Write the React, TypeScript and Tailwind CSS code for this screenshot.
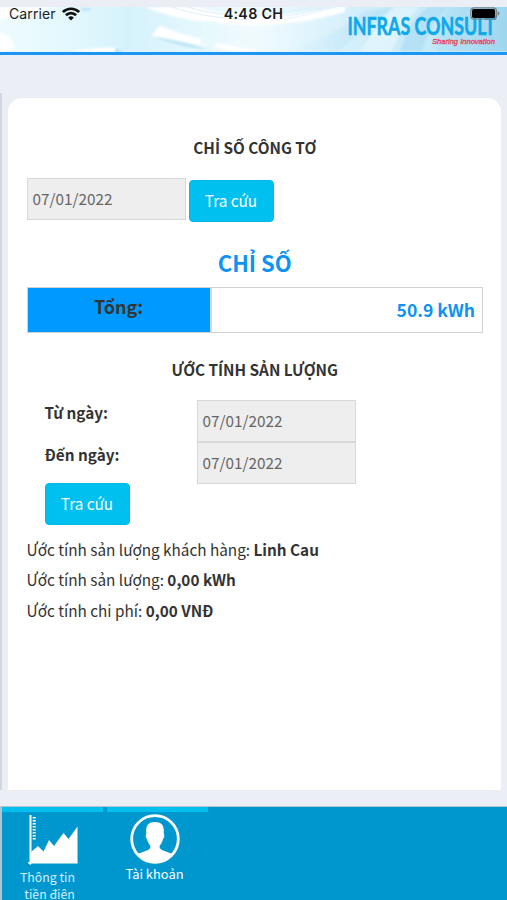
type SummaryRow = { label: string; value: string };

const SUMMARY: SummaryRow[] = [
  { label: 'Ước tính sản lượng khách hàng:', value: 'Linh Cau' },
  { label: 'Ước tính sản lượng:', value: '0,00 kWh' },
  { label: 'Ước tính chi phí:', value: '0,00 VNĐ' },
];

const HeaderBackground = () => (
  <svg className="absolute inset-0 h-full w-full" viewBox="0 0 507 45" preserveAspectRatio="none">
    <defs>
      <linearGradient id="sky" x1="0" x2="1" y1="0" y2="0">
        <stop offset="0" stopColor="#effbfe" />
        <stop offset="0.14" stopColor="#e3f8fd" />
        <stop offset="0.25" stopColor="#d5f2fc" />
        <stop offset="0.5" stopColor="#f1fbfe" />
        <stop offset="0.7" stopColor="#d3effb" />
        <stop offset="0.86" stopColor="#c3e9f9" />
        <stop offset="1" stopColor="#9bd5ef" />
      </linearGradient>
      <linearGradient id="shade" x1="0" x2="1" y1="0" y2="0">
        <stop offset="0" stopColor="#bfe6f8" stopOpacity="0" />
        <stop offset="1" stopColor="#a9dcf4" />
      </linearGradient>
      <filter id="soft">
        <feGaussianBlur stdDeviation="1.2" />
      </filter>
    </defs>
    <rect width="507" height="45" fill="url(#sky)" />
    <g filter="url(#soft)">
      <path d="M0 0h58l-20 4L0 12z" fill="#fff" />
      <path d="M82 1h10l-2 3h-9z" fill="#bde5fa" />
      <path d="M0 26q12 3 15 15l-15 6z" fill="#fff" />
      <path d="M70 45q28-5 45-4l5 5z" fill="#fff" />
      <path d="M115 42l8 4h-8z" fill="#a9ddf3" />
      <path d="M145 0h52q55 17 130 2l18-3v6q-60 18-125 12-48-5-75-17z" fill="#fff" />
      <path d="M160 19q25 10 60 18l40 8h-25l-84-16z" fill="#fff" />
      <path d="M154 30q30 4 56 14l-20-3q-22-5-36-11z" fill="#bde6f6" />
      <path d="M205 14l15 2-5 27-15-6z" fill="#e6fafb" />
      <path d="M275 45q50-8 88-40l30-5-55 45z" fill="url(#shade)" opacity="0.55" />
      <path d="M360 45q18-28 35-45h24q-18 20-27 45z" fill="#eaf8fe" opacity="0.65" />
      <path d="M400 45q8-28 28-45h20q-20 18-26 45z" fill="#a8dbf3" opacity="0.6" />
      <path d="M437 45q-1-18 12-45h58v45z" fill="#a5daf0" opacity="0.35" />
    </g>
    <g fill="none" stroke="#cce6ee" strokeWidth="0.6">
      <path d="M172 0q30 11 78 13M188 0q20 7 56 9" />
      <path d="M270 14q32-3 60-13M275 10q30-2 50-10M270 6q24-1 42-6" strokeDasharray="2 1" />
    </g>
  </svg>
);

const Logo = () => (
  <svg className="absolute top-0 right-0" width="167" height="45" viewBox="340 7 167 45">
    <text
      x="347.5"
      y="34.5"
      textLength="148"
      lengthAdjust="spacingAndGlyphs"
      className="fill-[#0fa9ea] stroke-[#0fa9ea] stroke-[0.6] font-['Lato',sans-serif] text-[25.500px] font-bold"
    >
      INFRAS CONSULT
    </text>
    <text
      x="432"
      y="44"
      textLength="63"
      lengthAdjust="spacingAndGlyphs"
      className="fill-[#e6455a] stroke-[#e6455a] stroke-[0.35] font-['Liberation_Sans',sans-serif] text-[8px] italic"
    >
      Sharing Innovation
    </text>
  </svg>
);

const WifiIcon = () => (
  <svg width="18" height="14" viewBox="0 0 18 14" fill="none" stroke="#111" strokeWidth="2.7">
    <path d="M0.9 5.1a11.5 11.5 0 0 1 16.2 0" />
    <path d="M3.9 8.3a7.2 7.2 0 0 1 10.2 0" />
    <path d="M9 13.6l-2.8-2.9a4 4 0 0 1 5.6 0z" fill="#111" stroke="none" />
  </svg>
);

const BatteryIcon = () => (
  <svg width="30" height="13" viewBox="0 0 30 13">
    <rect x="0.8" y="0.8" width="25.8" height="11.4" rx="3.4" fill="none" stroke="#75858d" strokeWidth="1.2" />
    <rect x="2" y="2" width="23.2" height="9" rx="1.8" fill="#000" />
    <path d="M27.8 4.3q1.8 0.8 1.8 2.2t-1.8 2.2z" fill="#75858d" />
  </svg>
);

const StatusBar = () => (
  <div className="absolute inset-x-0 top-0 flex h-[27px] items-center justify-between pr-[7px] pl-[9px] font-['Inter',sans-serif] text-[#1c1c1e]">
    <div className="flex w-[200px] items-center gap-1.5 text-[14px] tracking-[0.1px]">
      Carrier
      <WifiIcon />
    </div>
    <div className="-ml-0.5 text-[14.300px] font-semibold tracking-[0.3px]">4:48 CH</div>
    <div className="flex w-[200px] justify-end">
      <BatteryIcon />
    </div>
  </div>
);

const DateField = ({ value }: { value: string }) => (
  <div className="flex h-[42px] w-[159px] items-center border-[1.500px] border-[#d6d9dc] bg-[#eee] px-[5px] pb-px text-[15.3px] text-[#666]">
    {value}
  </div>
);

const SearchButton = () => (
  <button className="h-[42px] w-[85px] rounded-[4px] border border-[#00b8e6] bg-[#00c0ef] pb-px text-[15.3px] text-white">
    Tra cứu
  </button>
);

const ChartIcon = () => (
  <svg className="shrink-0" width="50" height="50" viewBox="0 0 50 50" fill="#fff">
    <path d="M1.5 0h2v48h-2z" />
    <path d="M0 47h49.500v1.500H3.500L2.500 50 0 48z" />
    <path d="M3 37l7-6 5.500 5.500L21 25l5 6 9.500-13 5 6L49.500 11.500V48H3z" />
    <path d="M6.200 2v24" stroke="#fff" strokeWidth="3" strokeDasharray="1.500 1.500" />
  </svg>
);

const AccountIcon = () => (
  <svg className="shrink-0" width="50" height="50" viewBox="0 0 50 50">
    <circle cx="25" cy="25" r="23.300" fill="none" stroke="#fff" strokeWidth="2.800" />
    <path
      d="M25 8c6 0 9 3 8.800 9v3c1 1 .5 4-.8 5-.5 3-2 5-3.500 7 0 3 2 4 5 5l8 3Q35 48 25 48T7.500 40l8-3c3-1 5-2 5-5-1.500-2-3-4-3.500-7-1.300-1-1.800-4-.8-5v-3C16 11 19 8 25 8z"
      fill="#fff"
    />
  </svg>
);

export default function App() {
  return (
    <div className="flex h-[900px] w-[507px] flex-col overflow-hidden bg-[#eceef5] font-['Noto_Sans_CJK_SC',sans-serif] text-[15.3px] text-[#333]">
      <header className="relative h-[55px] shrink-0 pt-[7px]">
        <div className="relative h-[47.500px] border-b-[3px] border-[#1c96f3]">
          <HeaderBackground />
          <Logo />
        </div>
        <StatusBar />
      </header>

      <div className="mt-[38px] flex h-[697px] shrink-0 border-l-2 border-[#d3d6de] pr-[6px] pl-[6px]">
        <main className="mt-[5px] w-[493px] rounded-t-[14px] bg-white pr-[18px] pl-[18.500px]">
          <h1 className="mt-[37px] text-center leading-6 font-bold">CHỈ SỐ CÔNG TƠ</h1>
          <div className="mt-[19px] flex gap-[3px]">
            <DateField value="07/01/2022" />
            <div className="pt-0.5">
              <SearchButton />
            </div>
          </div>

          <h2 className="mt-[24px] text-center text-[22px] leading-8 font-bold text-[#0c93f5]">CHỈ SỐ</h2>
          <div className="mt-[9px] flex h-[46px] border-[1.500px] border-[#d2d2d2]">
            <div className="w-[184px] border-r-2 border-[#d0d8e0] bg-[#0099ff] pt-[6px] text-center text-[18px] leading-6 font-bold">
              Tổng:
            </div>
            <div className="flex flex-1 items-center justify-end pt-px pr-[7px] text-[17.500px] font-bold text-[#0c93f5]">
              50.9 kWh
            </div>
          </div>

          <h1 className="mt-[24px] text-center leading-6 font-bold">ƯỚC TÍNH SẢN LƯỢNG</h1>
          <div className="mt-[19px] pl-[18px]">
            <div className="flex h-[41.500px]">
              <div className="w-[152px] pt-px font-bold">Từ ngày:</div>
              <DateField value="07/01/2022" />
            </div>
            <div className="flex h-[41.500px]">
              <div className="w-[152px] pt-px font-bold">Đến ngày:</div>
              <DateField value="07/01/2022" />
            </div>
            <SearchButton />
          </div>

          <div className="mt-[8.500px]">
            {SUMMARY.map(({ label, value }) => (
              <div key={label} className="h-[30.500px] leading-[30px]">
                {label} <b>{value}</b>
              </div>
            ))}
          </div>
        </main>
      </div>

      <nav className="mt-4 flex h-[94px] shrink-0 gap-1 border-t border-l-2 border-[#b4c3d0] bg-[#0097cf] text-white">
        <div className="flex w-[101px] flex-col border-t-[5px] border-[#00c0ef] pt-[3px] pl-[26px]">
          <ChartIcon />
          <div className="-ml-[26px] w-[91px] pt-[3px] text-center text-[12.300px] text-[#d5f0fa]">
            <div className="h-[17px] leading-[18px]">Thông tin</div>
            <div className="pl-1 leading-[18px]">tiền điện</div>
          </div>
        </div>
        <div className="flex w-[101px] flex-col items-center border-t-[5px] border-[#00c0ef] pt-[2px] pr-[6px]">
          <AccountIcon />
          <div className="text-[12.900px] leading-[20px]">Tài khoản</div>
        </div>
      </nav>
    </div>
  );
}
